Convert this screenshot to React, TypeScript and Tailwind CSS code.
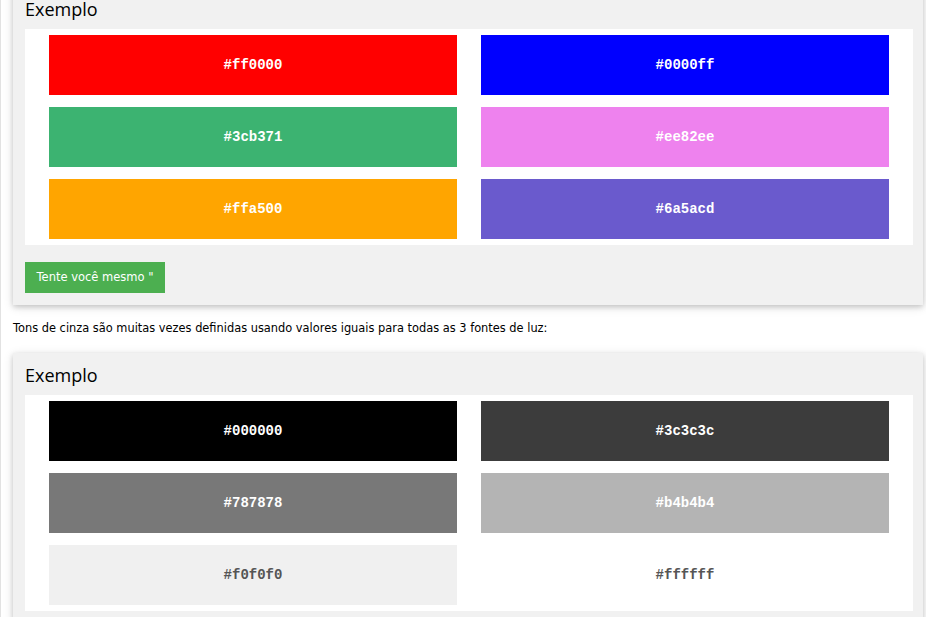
const firstSet = [
  { hex: "#ff0000", dark: false },
  { hex: "#0000ff", dark: false },
  { hex: "#3cb371", dark: false },
  { hex: "#ee82ee", dark: false },
  { hex: "#ffa500", dark: false },
  { hex: "#6a5acd", dark: false },
];

const greySet = [
  { hex: "#000000", dark: false },
  { hex: "#3c3c3c", dark: false },
  { hex: "#787878", dark: false },
  { hex: "#b4b4b4", dark: false },
  { hex: "#f0f0f0", dark: true },
  { hex: "#ffffff", dark: true },
];

function Swatches({ items }: { items: { hex: string; dark: boolean }[] }) {
  return (
    <div className="bg-white px-6 py-1.5 grid grid-cols-2 gap-x-6 gap-y-3">
      {items.map((c) => (
        <div
          key={c.hex}
          className={`h-[60px] pt-px flex items-center justify-center text-[14px] font-bold font-['Liberation_Mono',monospace] ${c.dark ? "text-[#555555]" : "text-white"}`}
          style={{ backgroundColor: c.hex }}
        >
          {c.hex}
        </div>
      ))}
    </div>
  );
}

function Example({ items, button }: { items: { hex: string; dark: boolean }[]; button?: boolean }) {
  return (
    <div className="bg-[#f1f1f1] ml-[12px] mr-[3px] pl-3 pr-[10px] pt-[11px] pb-3 shadow-[0_2px_5px_0_rgba(0,0,0,0.16),0_2px_10px_0_rgba(0,0,0,0.12)]">
      <h2 className="text-[18px] leading-[22px] mb-[9px] text-black font-['Open_Sans',sans-serif]">Exemplo</h2>
      <Swatches items={items} />
      {button && (
        <button className="mt-[17px] w-[140px] bg-[#4caf50] text-white text-[11.5px] h-[31px] font-['DejaVu_Sans',sans-serif]">
          Tente você mesmo "
        </button>
      )}
    </div>
  );
}

export default function App() {
  return (
    <div className="w-[926px] h-[617px] overflow-hidden bg-white border-l border-[#e2e2e2] font-['DejaVu_Sans',sans-serif]">
      <div className="mt-[-13px]">
        <Example items={firstSet} button />
        <p className="ml-[12px] mt-[16px] mb-[18px] text-[11.4px] leading-[14px] text-black">
          Tons de cinza são muitas vezes definidas usando valores iguais para todas as 3 fontes de luz:
        </p>
        <Example items={greySet} />
      </div>
    </div>
  );
}
